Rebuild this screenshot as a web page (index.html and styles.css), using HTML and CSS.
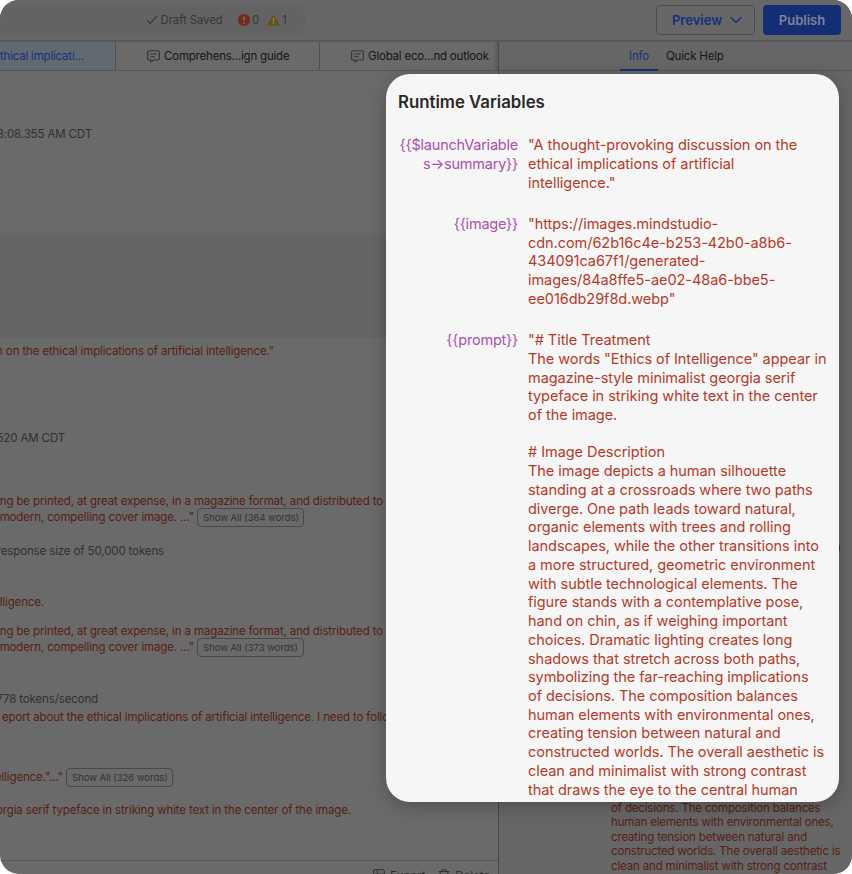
FILE: index.html
```html
<!DOCTYPE html>
<html lang="en">
<head>
<meta charset="utf-8">
<title>Runtime Variables</title>
<link rel="stylesheet" href="styles.css">
</head>
<body>
<div class="app">
  <header class="topbar">
    <div class="status">
      <svg class="check" width="12" height="10" viewBox="0 0 12 10"><path d="M1 5.2 4.2 8.4 10.8 1.2"/></svg>
      <span class="saved">Draft Saved</span>
      <svg class="err" width="12" height="12" viewBox="0 0 12 12"><path fill="#712c22" d="M3.7.3h4.6L11.7 3v6L8.3 11.7H3.7L.3 9V3z"/><path stroke="#8f7773" stroke-width="1.4" d="M6 2.8v3.8M6 8v1.4"/></svg>
      <span class="count-err">0</span>
      <svg class="warn" width="13" height="12" viewBox="0 0 13 12"><path fill="#65531b" stroke="#65531b" stroke-linejoin="round" d="M6.5 1 12.3 11H.7z"/><path stroke="#96906f" stroke-width="1.3" d="M6.5 4v3.4M6.5 8.5v1.3"/></svg>
      <span>1</span>
    </div>
    <div class="actions">
      <div class="btn preview">Preview <svg width="12" height="8" viewBox="0 0 12 8"><path d="M1 1.2 6 6.4 11 1.2"/></svg></div>
      <div class="btn publish">Publish</div>
    </div>
  </header>
  <div class="workspace">
    <section class="main">
      <nav class="tabs">
        <div class="tab active">thical implicati...</div>
        <div class="tab second"><svg class="chat" width="13" height="13" viewBox="0 0 13 13"><path d="M2.2.8h8.6q1.6 0 1.6 1.6v6q0 1.6-1.6 1.6H6.8L4 12V10H2.2Q.6 10 .6 8.400V2.400Q.6.8 2.2.8zM3.300 4h6.400M3.300 6.700h4.400"/></svg>Comprehens...ign guide</div>
        <div class="tab third"><svg class="chat" width="13" height="13" viewBox="0 0 13 13"><path d="M2.2.8h8.6q1.6 0 1.6 1.6v6q0 1.6-1.6 1.6H6.8L4 12V10H2.2Q.6 10 .6 8.400V2.400Q.6.8 2.2.8zM3.300 4h6.400M3.300 6.700h4.400"/></svg>Global eco...nd outlook</div>
      </nav>
      <div class="log">
        <p class="line l1">3:08.355 AM CDT</p>
        <div class="band"></div>
        <p class="line red l2">n on the ethical implications of artificial intelligence."</p>
        <p class="line l3">520 AM CDT</p>
        <p class="line red l4">ng be printed, at great expense, in a magazine format, and distributed to</p>
        <div class="row"><p class="line red l5">modern, compelling cover image. ..."</p><span class="more">Show All (364 words)</span></div>
        <p class="line l6">response size of 50,000 tokens</p>
        <p class="line red l7">lligence.</p>
        <p class="line red l8">ng be printed, at great expense, in a magazine format, and distributed to</p>
        <div class="row"><p class="line red l5">modern, compelling cover image. ..."</p><span class="more">Show All (373 words)</span></div>
        <p class="line l9">778 tokens/second</p>
        <p class="line red l10">eport about the ethical implications of artificial intelligence. I need to follo</p>
        <div class="row last"><p class="line red l11">elligence."..."</p><span class="more">Show All (326 words)</span></div>
        <p class="line red l12">orgia serif typeface in striking white text in the center of the image.</p>
      </div>
      <footer class="foot">
        <svg width="12" height="12" viewBox="0 0 12 12"><path d="M2 .7h8q1.300 0 1.300 1.300v8q0 1.300-1.300 1.300H2Q.7 11.300.7 10V2Q.7.7 2 .7zM4.400.7v10.600M.7 5h10.600"/></svg>
        <span class="exp">Export</span>
        <svg width="12" height="12" viewBox="0 0 12 12"><path d="M.6 2.600h10.800M4 2.600V.7h4v1.900M2 2.600l.6 8.700h6.800l.6-8.700M4.800 5v4M7.200 5v4"/></svg>
        <span class="del">Delete</span>
      </footer>
    </section>
    <aside class="side">
      <nav class="subtabs"><span class="info">Info</span><span class="help">Quick Help</span></nav>
      <div class="peek">n</div>
      <div class="prompt">of decisions. The composition balances<br>human elements with environmental ones,<br>creating tension between natural and<br>constructed worlds. The overall aesthetic is<br>clean and minimalist with strong contrast</div>
    </aside>
  </div>
  <div class="modal">
    <h1>Runtime Variables</h1>
    <dl>
      <dt>{{$launchVariable<br>s→summary}}</dt>
      <dd>"A thought-provoking discussion on the<br>ethical implications of artificial<br>intelligence."</dd>
      <dt>{{image}}</dt>
      <dd>"https://images.mindstudio-<br>cdn.com/62b16c4e-b253-42b0-a8b6-<br>434091ca67f1/generated-<br>images/84a8ffe5-ae02-48a6-bbe5-<br>ee016db29f8d.webp"</dd>
      <dt>{{prompt}}</dt>
      <dd>"# Title Treatment<br>The words "Ethics of Intelligence" appear in<br>magazine-style minimalist georgia serif<br>typeface in striking white text in the center<br>of the image.<br><br># Image Description<br>The image depicts a human silhouette<br>standing at a crossroads where two paths<br>diverge. One path leads toward natural,<br>organic elements with trees and rolling<br>landscapes, while the other transitions into<br>a more structured, geometric environment<br>with subtle technological elements. The<br>figure stands with a contemplative pose,<br>hand on chin, as if weighing important<br>choices. Dramatic lighting creates long<br>shadows that stretch across both paths,<br>symbolizing the far-reaching implications<br>of decisions. The composition balances<br>human elements with environmental ones,<br>creating tension between natural and<br>constructed worlds. The overall aesthetic is<br>clean and minimalist with strong contrast<br>that draws the eye to the central human</dd>
    </dl>
  </div>
</div>
</body>
</html>
```

FILE: styles.css
```css
* { box-sizing: border-box; }
body { margin: 0; background: #fff; font-family: Inter, sans-serif; font-size: 11.5px; line-height: 16px; letter-spacing: -.13px; color: #2b2b2b; }
p, h1, dl, dd { margin: 0; }
svg { fill: none; flex: none; }
.app { position: relative; width: 852px; height: 874px; overflow: hidden; border-radius: 19px; background: #6a6a6a; display: flex; flex-direction: column; white-space: nowrap; }

.topbar { height: 42px; flex: none; display: flex; justify-content: space-between; align-items: flex-start; border-bottom: 2px solid #585858; background: #676767; padding: 5px 11px 0 0; }
.status { width: 305px; height: 30px; border-radius: 0 8px 8px 0; background: #636363; display: flex; align-items: center; padding-left: 146px; color: #373737; }
.check { stroke: #373737; stroke-width: 1.2; margin-right: 2.5px; }
.saved { width: 62px; margin-right: 15px; }
.err { margin-right: 2.5px; }
.count-err { width: 15px; }
.warn { margin-right: 2px; }
.actions { display: flex; gap: 8px; }
.btn { height: 30px; border-radius: 4px; display: flex; align-items: center; justify-content: center; font-size: 13px; font-weight: 600; letter-spacing: 0; }
.preview { width: 99px; border: 1px solid #4b4b4b; color: #14307c; gap: 8px; padding-left: 3px; }
.preview svg { stroke: #14307c; stroke-width: 1.4; }
.publish { width: 78px; background: #142e76; color: #7e8596; }

.workspace { flex: 1; min-height: 0; display: flex; }
.main { width: 499px; border-right: 1px solid #484848; display: flex; flex-direction: column; }
.tabs { height: 29px; flex: none; display: flex; border-bottom: 1px solid #555; color: #151515; letter-spacing: -.2px; }
.tab { display: flex; align-items: center; border-right: 1px solid #505050; }
.active { width: 116px; background: #616971; color: #17327d; }
.second { width: 204px; padding-left: 31px; gap: 4px; }
.third { flex: 1; padding-left: 31px; gap: 4px; border: 0; background: linear-gradient(to right, transparent 97%, #5a5a5a); }
.chat { stroke: #343434; stroke-width: 1.1; }

.log { height: 789px; flex: none; overflow: hidden; }
.line { display: flex; justify-content: flex-end; height: 16px; line-height: 16px; color: #303030; }
.red { color: #581d15; }
.row { display: flex; gap: 3px; height: 16px; }
.more { height: 19px; margin-top: -1px; border: 1px solid #494949; border-radius: 4px; padding: 0 5px; font-size: 9.5px; letter-spacing: -.03px; line-height: 17px; color: #333; width: 107px; text-align: center; }
.l1 { width: 92px; margin-top: 55px; }
.band { height: 103px; margin-top: 93px; background: #656565; }
.l2 { width: 274px; margin-top: 5px; }
.l3 { width: 65px; margin-top: 71px; }
.l4 { width: 383px; margin-top: 47px; }
.l5 { width: 194px; }
.l6 { width: 164px; margin-top: 17.5px; }
.l7 { width: 44px; margin-top: 35px; }
.l8 { width: 383px; margin-top: 13px; }
.l9 { width: 98px; margin-top: 36px; }
.l10 { width: 389px; margin-top: 2px; }
.last { margin-top: 44.5px; }
.l11 { width: 63px; }
.l12 { width: 351px; margin-top: 16.5px; }

.foot { flex: 1; border-top: 1px solid #595959; display: flex; padding: 8px 8px 0 373px; color: #303030; letter-spacing: 0; }
.foot svg { stroke: #303030; margin-right: 5px; }
.foot span { line-height: 14px; }
.exp { width: 52px; }

.side { flex: 1; min-width: 0; display: flex; flex-direction: column; background: #666; }
.subtabs { height: 29px; flex: none; display: flex; gap: 8px; border-bottom: 1px solid #545454; padding-left: 121px; color: #161616; line-height: 29px; letter-spacing: -.2px; }
.info { width: 38px; height: 29px; text-align: center; color: #17327d; border-bottom: 2px solid #142f7a; }
.peek { margin: 468px 0 0 335px; height: 16px; color: #581d15; }
.prompt { margin: 245.500px 0 0 112px; line-height: 14.600px; letter-spacing: -.16px; color: #581d15; }

.modal { position: absolute; left: 386px; top: 74px; width: 452.500px; height: 728px; overflow: hidden; border-radius: 24px; background: #f6f6f6; box-shadow: 0 4px 18px rgba(0,0,0,.25); padding: 18px 12px 0; }
h1 { font-size: 16.800px; line-height: 20px; font-weight: 600; letter-spacing: 0; color: #292929; }
dl { margin-top: 24.200px; display: grid; grid-template-columns: 120px 1fr; column-gap: 10px; row-gap: 22.500px; font-size: 14.500px; line-height: 18.740px; letter-spacing: -.05px; }
dt { text-align: right; color: #aa4fae; letter-spacing: -.22px; }
dd { color: #b23b2a; }
```
